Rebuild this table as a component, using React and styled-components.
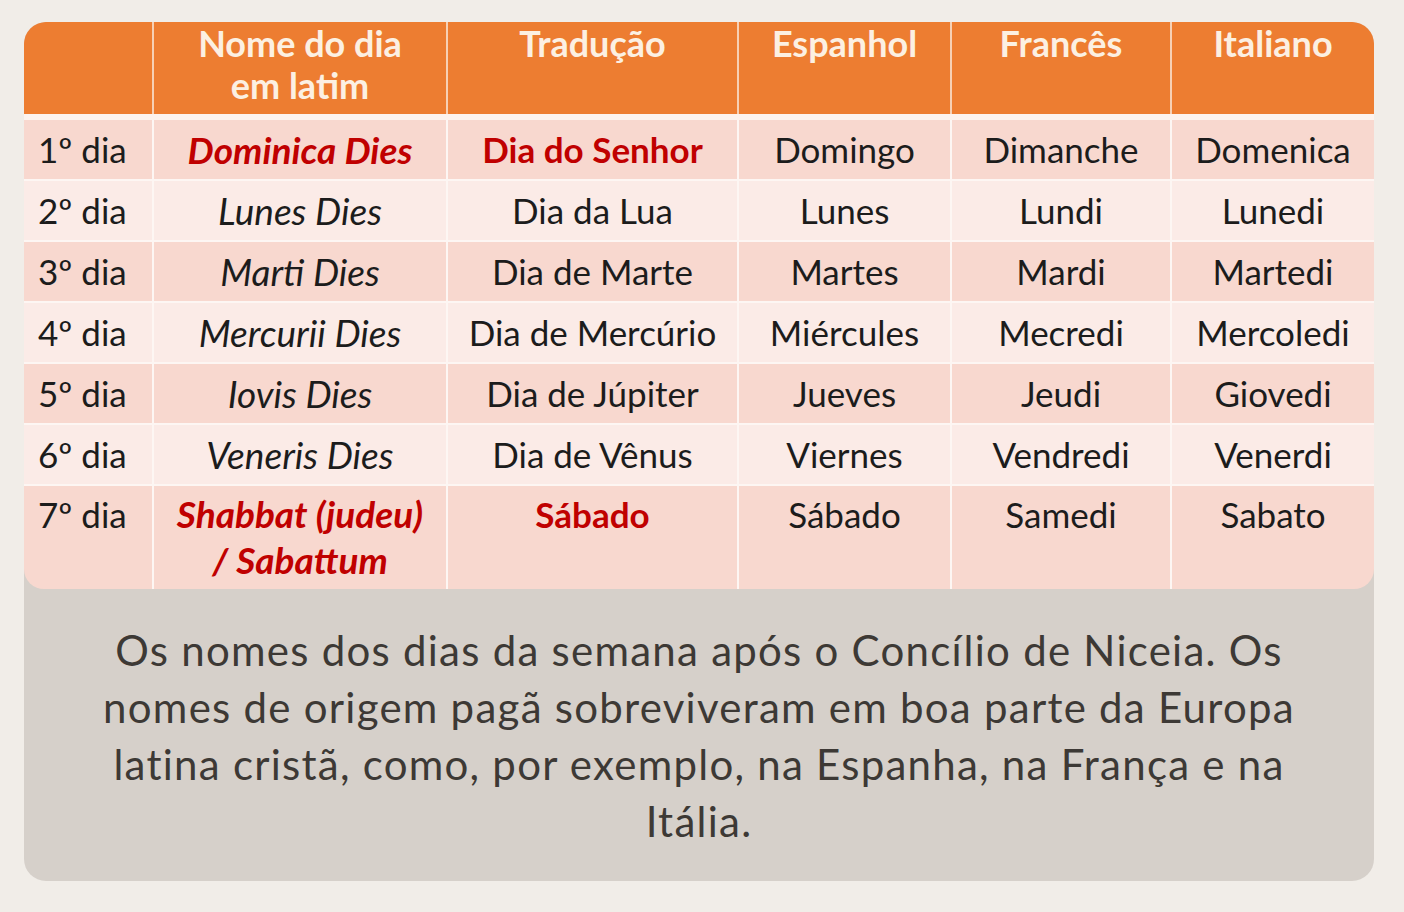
import React from 'react'
import styled, { createGlobalStyle } from 'styled-components'

const GlobalStyle = createGlobalStyle`
  html, body {
    margin: 0;
    padding: 0;
    background: #f1ede8;
  }
  body {
    font-family: Lato, "Open Sans", sans-serif;
  }
`

const Page = styled.div`
  padding: 22px 30px 30px 24px;
`

const Figure = styled.figure`
  margin: 0;
  width: 1350px;
  background: #d6d0ca;
  border-radius: 22px;
  overflow: hidden;
`

const Table = styled.table`
  width: 100%;
  border-collapse: collapse;
  table-layout: fixed;
  border-radius: 20px;
  overflow: hidden;
  font-family: Lato, "Open Sans", sans-serif;
  font-size: 35px;
  color: #1c1c1c;
`

const HeadCell = styled.th`
  background: #ed7d31;
  color: #fcf0e2;
  font-size: 36px;
  font-weight: 700;
  height: 92px;
  padding: 0 4px;
  vertical-align: top;
  line-height: 42px;
  text-align: center;
  border-left: 2px solid #f7d0b4;
  border-bottom: 6px solid #fdf3ee;
  &:first-child {
    border-left: none;
  }
`

const Row = styled.tr`
  background: ${p => (p.$odd ? '#f8d8cf' : '#fbebe7')};
`

const Cell = styled.td`
  height: ${p => (p.$tall ? '98px' : '59px')};
  padding: ${p => (p.$tall ? '5px 2px 0' : '0 2px')};
  vertical-align: ${p => (p.$tall ? 'top' : 'middle')};
  text-align: ${p => (p.$left ? 'left' : 'center')};
  padding-left: ${p => (p.$left ? '14px' : '2px')};
  line-height: ${p => (p.$tall ? '46px' : '43px')};
  border-left: 2px solid #fdf6f3;
  border-top: 2px solid #fdf6f3;
  white-space: nowrap;
  font-size: ${p => (p.$italic ? '37px' : '35px')};
  font-style: ${p => (p.$italic ? 'italic' : 'normal')};
  font-weight: ${p => (p.$red ? 700 : 400)};
  color: ${p => (p.$red ? '#c00000' : '#1c1c1c')};
  &:first-child {
    border-left: none;
  }
`

const Caption = styled.figcaption`
  padding: 33px 58px 31px;
  text-align: center;
  font-family: Lato, "Open Sans", sans-serif;
  font-size: 42px;
  letter-spacing: 1.25px;
  line-height: 57px;
  color: #3d3935;
`

const widths = [129, 294, 291, 213, 220, 203]

const headers = [
  '',
  <>Nome do dia<br />em latim</>,
  'Tradução',
  'Espanhol',
  'Francês',
  'Italiano',
]

const rows = [
  ['1º dia', 'Dominica Dies', 'Dia do Senhor', 'Domingo', 'Dimanche', 'Domenica', true, true],
  ['2º dia', 'Lunes Dies', 'Dia da Lua', 'Lunes', 'Lundi', 'Lunedi'],
  ['3º dia', 'Marti Dies', 'Dia de Marte', 'Martes', 'Mardi', 'Martedi'],
  ['4º dia', 'Mercurii Dies', 'Dia de Mercúrio', 'Miércules', 'Mecredi', 'Mercoledi'],
  ['5º dia', 'Iovis Dies', 'Dia de Júpiter', 'Jueves', 'Jeudi', 'Giovedi'],
  ['6º dia', 'Veneris Dies', 'Dia de Vênus', 'Viernes', 'Vendredi', 'Venerdi'],
  ['7º dia', <>Shabbat (judeu)<br />/ Sabattum</>, 'Sábado', 'Sábado', 'Samedi', 'Sabato', true, true],
]

const App = () => {
  return (
    <Page>
      <GlobalStyle />
      <Figure>
        <Table>
          <colgroup>
            {widths.map((w, i) => <col key={i} style={{ width: w }} />)}
          </colgroup>
          <thead>
            <tr>
              {headers.map((h, i) => (
                <HeadCell key={i}>{h}</HeadCell>
              ))}
            </tr>
          </thead>
          <tbody>
            {rows.map((r, i) => {
              const tall = i === 6
              return (
                <Row key={i} $odd={i % 2 === 0}>
                  <Cell $left $tall={tall}>{r[0]}</Cell>
                  <Cell $italic $red={r[6]} $tall={tall}>{r[1]}</Cell>
                  <Cell $red={r[7]} $tall={tall}>{r[2]}</Cell>
                  <Cell $tall={tall}>{r[3]}</Cell>
                  <Cell $tall={tall}>{r[4]}</Cell>
                  <Cell $tall={tall}>{r[5]}</Cell>
                </Row>
              )
            })}
          </tbody>
        </Table>
        <Caption>
          Os nomes dos dias da semana após o Concílio de Niceia. Os nomes de origem pagã sobreviveram em boa parte da Europa latina cristã, como, por exemplo, na Espanha, na França e na Itália.
        </Caption>
      </Figure>
    </Page>
  )
}

export default App
